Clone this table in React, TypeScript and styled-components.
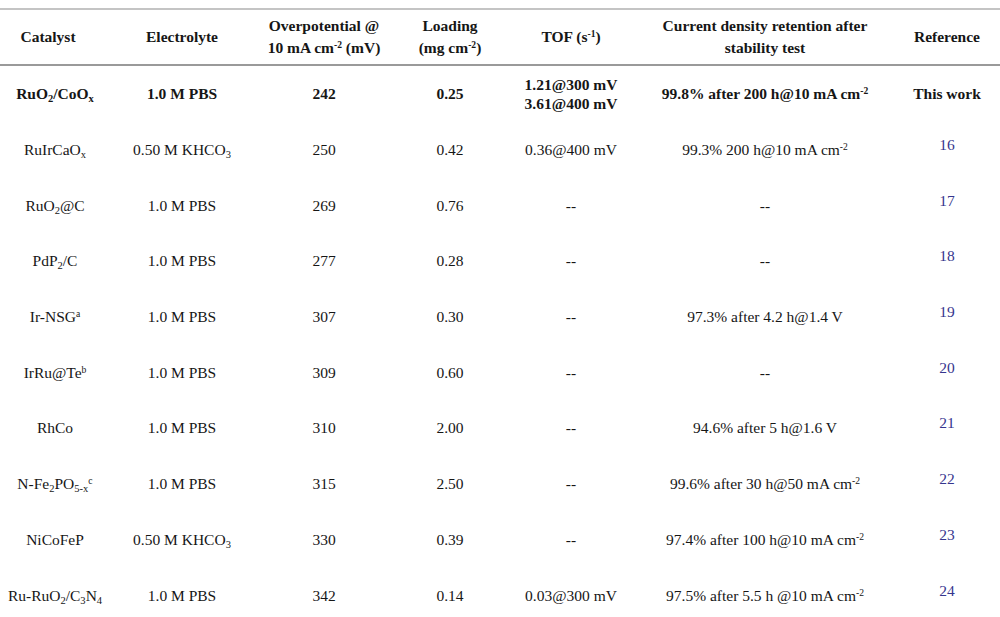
import React from "react";
import styled, { createGlobalStyle } from "styled-components";

const Global = createGlobalStyle`
  html, body { margin: 0; padding: 0; background: #ffffff; }
  body { padding-top: 8px; font-family: "Liberation Serif", "Times New Roman", serif; color: #161616; }
`;

const COLS = "110px 144px 140px 112px 130px 258px 106px";

const Table = styled.div`
  width: 1000px;
  border-top: 2px solid #c4c4c4;
`;

const HeadRow = styled.div`
  display: grid;
  grid-template-columns: ${COLS};
  height: 54px;
  border-bottom: 2px solid #9a9a9a;
`;

const HeadCell = styled.div<{ $shift?: number }>`
  display: flex;
  align-items: center;
  justify-content: center;
  text-align: center;
  font-weight: bold;
  font-size: 15.5px;
  line-height: 22px;
  padding-right: ${(p) => (p.$shift ? p.$shift : 0)}px;
`;

const Row = styled.div`
  display: grid;
  grid-template-columns: ${COLS};
  height: 55.7px;
`;

const Cell = styled.div<{ $bold?: boolean }>`
  display: flex;
  align-items: center;
  justify-content: center;
  text-align: center;
  font-size: 15.5px;
  line-height: 19px;
  white-space: nowrap;
  font-weight: ${(p) => (p.$bold ? "bold" : "normal")};
`;

const RefCell = styled(Cell)<{ $link?: boolean }>`
  color: ${(p) => (p.$link ? "#36368e" : "#161616")};
  padding-bottom: ${(p) => (p.$link ? "10px" : "0")};
`;

const Sub = styled.sub`
  font-size: 0.68em;
  vertical-align: -0.25em;
  line-height: 0;
`;

const Sup = styled.sup`
  font-size: 0.62em;
  vertical-align: 0.55em;
  line-height: 0;
`;

type RowData = {
  cat: React.ReactNode;
  el: React.ReactNode;
  op: string;
  load: string;
  tof: React.ReactNode;
  cur: React.ReactNode;
  ref: string;
  bold?: boolean;
};

const KHCO3 = (
  <>
    0.50 M KHCO<Sub>3</Sub>
  </>
);
const cm2 = (
  <>
    cm<Sup>-2</Sup>
  </>
);

const rows: RowData[] = [
  {
    cat: (
      <>
        RuO<Sub>2</Sub>/CoO<Sub>x</Sub>
      </>
    ),
    el: "1.0 M PBS",
    op: "242",
    load: "0.25",
    tof: (
      <>
        1.21@300 mV
        <br />
        3.61@400 mV
      </>
    ),
    cur: <>99.8% after 200 h@10 mA {cm2}</>,
    ref: "This work",
    bold: true,
  },
  {
    cat: (
      <>
        RuIrCaO<Sub>x</Sub>
      </>
    ),
    el: KHCO3,
    op: "250",
    load: "0.42",
    tof: "0.36@400 mV",
    cur: <>99.3% 200 h@10 mA {cm2}</>,
    ref: "16",
  },
  {
    cat: (
      <>
        RuO<Sub>2</Sub>@C
      </>
    ),
    el: "1.0 M PBS",
    op: "269",
    load: "0.76",
    tof: "--",
    cur: "--",
    ref: "17",
  },
  {
    cat: (
      <>
        PdP<Sub>2</Sub>/C
      </>
    ),
    el: "1.0 M PBS",
    op: "277",
    load: "0.28",
    tof: "--",
    cur: "--",
    ref: "18",
  },
  {
    cat: (
      <>
        Ir-NSG<Sup>a</Sup>
      </>
    ),
    el: "1.0 M PBS",
    op: "307",
    load: "0.30",
    tof: "--",
    cur: "97.3% after 4.2 h@1.4 V",
    ref: "19",
  },
  {
    cat: (
      <>
        IrRu@Te<Sup>b</Sup>
      </>
    ),
    el: "1.0 M PBS",
    op: "309",
    load: "0.60",
    tof: "--",
    cur: "--",
    ref: "20",
  },
  {
    cat: "RhCo",
    el: "1.0 M PBS",
    op: "310",
    load: "2.00",
    tof: "--",
    cur: "94.6% after 5 h@1.6 V",
    ref: "21",
  },
  {
    cat: (
      <>
        N-Fe<Sub>2</Sub>PO<Sub>5-x</Sub>
        <Sup>c</Sup>
      </>
    ),
    el: "1.0 M PBS",
    op: "315",
    load: "2.50",
    tof: "--",
    cur: <>99.6% after 30 h@50 mA {cm2}</>,
    ref: "22",
  },
  {
    cat: "NiCoFeP",
    el: KHCO3,
    op: "330",
    load: "0.39",
    tof: "--",
    cur: <>97.4% after 100 h@10 mA {cm2}</>,
    ref: "23",
  },
  {
    cat: (
      <>
        Ru-RuO<Sub>2</Sub>/C<Sub>3</Sub>N<Sub>4</Sub>
      </>
    ),
    el: "1.0 M PBS",
    op: "342",
    load: "0.14",
    tof: "0.03@300 mV",
    cur: <>97.5% after 5.5 h @10 mA {cm2}</>,
    ref: "24",
  },
];

export default function App() {
  return (
    <>
      <Global />
      <Table>
        <HeadRow>
          <HeadCell $shift={14}>Catalyst</HeadCell>
          <HeadCell>Electrolyte</HeadCell>
          <HeadCell>
            <span>
              Overpotential @
              <br />
              10 mA cm<Sup>-2</Sup> (mV)
            </span>
          </HeadCell>
          <HeadCell>
            <span>
              Loading
              <br />
              (mg cm<Sup>-2</Sup>)
            </span>
          </HeadCell>
          <HeadCell>
            <span>
              TOF (s<Sup>-1</Sup>)
            </span>
          </HeadCell>
          <HeadCell>
            <span>
              Current density retention after
              <br />
              stability test
            </span>
          </HeadCell>
          <HeadCell>Reference</HeadCell>
        </HeadRow>
        {rows.map((r, i) => (
          <Row key={i}>
            <Cell $bold={r.bold}><span>{r.cat}</span></Cell>
            <Cell $bold={r.bold}><span>{r.el}</span></Cell>
            <Cell $bold={r.bold}>{r.op}</Cell>
            <Cell $bold={r.bold}>{r.load}</Cell>
            <Cell $bold={r.bold}><span>{r.tof}</span></Cell>
            <Cell $bold={r.bold}><span>{r.cur}</span></Cell>
            <RefCell $bold={r.bold} $link={!r.bold}>{r.ref}</RefCell>
          </Row>
        ))}
      </Table>
    </>
  );
}
